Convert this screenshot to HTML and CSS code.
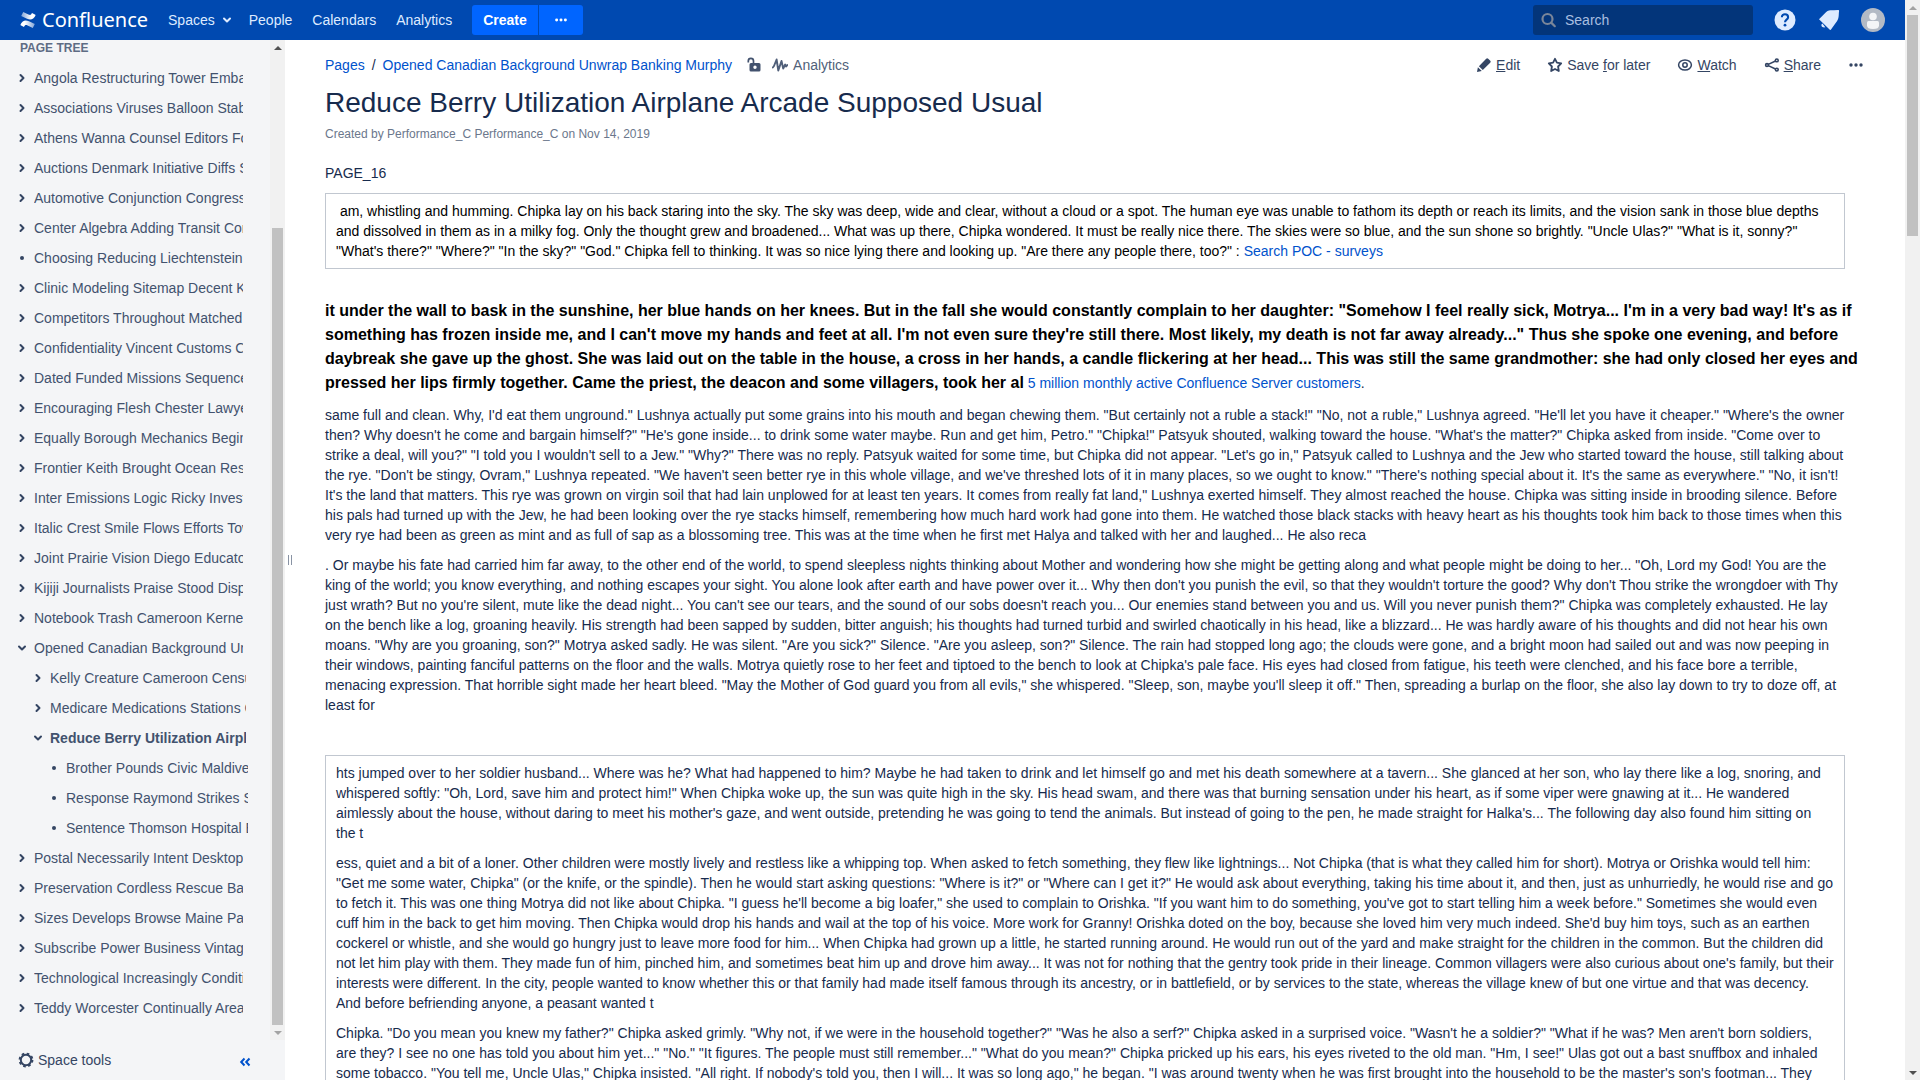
FILE: index.html
```html
<!DOCTYPE html>
<html lang="en">
<head>
<meta charset="utf-8">
<title>Reduce Berry Utilization Airplane Arcade Supposed Usual - Confluence</title>
<link rel="stylesheet" href="styles.css">
</head>
<body>
<svg class="sprite" aria-hidden="true">
  <symbol id="right" viewBox="0 0 16 16"><path d="M6.500 5 9.500 8l-3 3" fill="none" stroke="currentColor" stroke-width="2" stroke-linecap="round" stroke-linejoin="round"/></symbol>
  <symbol id="down" viewBox="0 0 16 16"><path d="M5 6.500 8 9.500l3-3" fill="none" stroke="currentColor" stroke-width="2" stroke-linecap="round" stroke-linejoin="round"/></symbol>
  <symbol id="dot" viewBox="0 0 16 16"><circle cx="8" cy="8" r="2" fill="currentColor"/></symbol>
  <symbol id="more" viewBox="0 0 16 16"><g fill="currentColor"><circle cx="3" cy="8" r="1.700"/><circle cx="8" cy="8" r="1.700"/><circle cx="13" cy="8" r="1.700"/></g></symbol>
</svg>
<div class="window">
  <div class="app">
    <header class="header">
      <a class="logo" href="#">
        <svg width="16" height="16" viewBox="0 0 16 16"><defs><linearGradient id="lg1" x1="1" y1="0" x2="0" y2="0"><stop offset="0" stop-color="#fff" stop-opacity=".5"/><stop offset=".7" stop-color="#fff"/></linearGradient><linearGradient id="lg2" x1="0" y1="0" x2="1" y2="0"><stop offset="0" stop-color="#fff" stop-opacity=".5"/><stop offset=".7" stop-color="#fff"/></linearGradient></defs><path d="M.6 12.200c1.800-2.900 4-5 8.400-3l5.800 2.700-2 4-5.200-2.400C5.600 12.600 5 13 4 14.900L.6 13.200z" fill="url(#lg1)"/><path d="M15.400 3.800c-1.800 2.900-4 5-8.400 3L1.200 4.100l2-4 5.200 2.400C10.400 3.400 11 3 12 1.100l3.400 1.700z" fill="url(#lg2)"/></svg>
        <span>Confluence</span>
      </a>
      <nav class="nav">
        <a href="#">Spaces <svg class="icon"><use href="#down"/></svg></a>
        <a href="#">People</a>
        <a href="#">Calendars</a>
        <a href="#">Analytics</a>
      </nav>
      <div class="create-group">
        <button class="create" type="button">Create</button>
        <button class="create-more" type="button" aria-label="Create from template"><svg class="icon small"><use href="#more"/></svg></button>
      </div>
      <div class="header-right">
        <label class="search">
          <svg class="icon" viewBox="0 0 16 16"><g fill="none" stroke="#7a8699" stroke-width="2.200"><circle cx="6.500" cy="7" r="5"/><path d="m10.200 10.600 3.600 3.600" stroke-linecap="round"/></g></svg>
          <input type="text" placeholder="Search" aria-label="Search">
        </label>
        <a class="round" href="#" aria-label="Help"><svg width="24" height="24" viewBox="0 0 24 24"><circle cx="12" cy="12" r="10.500" fill="#deebff"/><path d="M8.900 9.300c0-1.900 1.300-3 3.100-3s3.100 1.100 3.100 2.900c0 2.400-3.100 2.500-3.100 5" fill="none" stroke="#0049b0" stroke-width="2.100"/><circle cx="12" cy="17.200" r="1.400" fill="#0049b0"/></svg></a>
        <a class="round" href="#" aria-label="Notifications"><svg width="24" height="24" viewBox="0 0 24 24"><path d="M2 11.300 9.200 4C11.500 1.800 14.500 2.200 17 2.200l4-.3c.8 0 1.200.5 1.100 1.200-.6 3.200.2 7-2 9.900L14 21.600q-.5.700-1.200.100z" fill="#deebff"/><path d="M5.400 15.400c-1.800.8-1.400 4.600 2.900 3.900z" fill="#deebff"/></svg></a>
        <a class="round" href="#" aria-label="User profile"><svg width="24" height="24" viewBox="0 0 24 24"><circle cx="12" cy="12" r="12" fill="#b3bac5"/><circle cx="12" cy="8.500" r="3.800" fill="#f4f5f7"/><path d="M6 14.500q0-1.500 1.500-1.500h9q1.500 0 1.500 1.500v3q0 3.500-6 3.500t-6-3.500z" fill="#f4f5f7"/></svg></a>
      </div>
    </header>
    <div class="body">
      <aside class="sidebar">
        <div class="scroller">
          <div class="tree">
            <h2>PAGE TREE</h2>
            <ul>
              <li><svg class="icon"><use href="#right"/></svg><a href="#">Angola Restructuring Tower Embassy</a></li>
              <li><svg class="icon"><use href="#right"/></svg><a href="#">Associations Viruses Balloon Stable</a></li>
              <li><svg class="icon"><use href="#right"/></svg><a href="#">Athens Wanna Counsel Editors Forum</a></li>
              <li><svg class="icon"><use href="#right"/></svg><a href="#">Auctions Denmark Initiative Diffs Some</a></li>
              <li><svg class="icon"><use href="#right"/></svg><a href="#">Automotive Conjunction Congress</a></li>
              <li><svg class="icon"><use href="#right"/></svg><a href="#">Center Algebra Adding Transit Contact</a></li>
              <li><svg class="icon"><use href="#dot"/></svg><a href="#">Choosing Reducing Liechtenstein</a></li>
              <li><svg class="icon"><use href="#right"/></svg><a href="#">Clinic Modeling Sitemap Decent Kits</a></li>
              <li><svg class="icon"><use href="#right"/></svg><a href="#">Competitors Throughout Matched</a></li>
              <li><svg class="icon"><use href="#right"/></svg><a href="#">Confidentiality Vincent Customs Care</a></li>
              <li><svg class="icon"><use href="#right"/></svg><a href="#">Dated Funded Missions Sequence</a></li>
              <li><svg class="icon"><use href="#right"/></svg><a href="#">Encouraging Flesh Chester Lawyers</a></li>
              <li><svg class="icon"><use href="#right"/></svg><a href="#">Equally Borough Mechanics Begin</a></li>
              <li><svg class="icon"><use href="#right"/></svg><a href="#">Frontier Keith Brought Ocean Rest</a></li>
              <li><svg class="icon"><use href="#right"/></svg><a href="#">Inter Emissions Logic Ricky Invest</a></li>
              <li><svg class="icon"><use href="#right"/></svg><a href="#">Italic Crest Smile Flows Efforts Town</a></li>
              <li><svg class="icon"><use href="#right"/></svg><a href="#">Joint Prairie Vision Diego Educator</a></li>
              <li><svg class="icon"><use href="#right"/></svg><a href="#">Kijiji Journalists Praise Stood Display</a></li>
              <li><svg class="icon"><use href="#right"/></svg><a href="#">Notebook Trash Cameroon Kernel</a></li>
              <li><svg class="icon"><use href="#down"/></svg><a href="#">Opened Canadian Background Unwrap</a></li>
            </ul>
            <ul class="level2">
              <li><svg class="icon"><use href="#right"/></svg><a href="#">Kelly Creature Cameroon Census</a></li>
              <li><svg class="icon"><use href="#right"/></svg><a href="#">Medicare Medications Stations Core</a></li>
              <li><svg class="icon"><use href="#down"/></svg><a class="current" href="#">Reduce Berry Utilization Airplane</a></li>
            </ul>
            <ul class="level3">
              <li><svg class="icon"><use href="#dot"/></svg><a href="#">Brother Pounds Civic Maldives</a></li>
              <li><svg class="icon"><use href="#dot"/></svg><a href="#">Response Raymond Strikes Some</a></li>
              <li><svg class="icon"><use href="#dot"/></svg><a href="#">Sentence Thomson Hospital Ending</a></li>
            </ul>
            <ul>
              <li><svg class="icon"><use href="#right"/></svg><a href="#">Postal Necessarily Intent Desktop</a></li>
              <li><svg class="icon"><use href="#right"/></svg><a href="#">Preservation Cordless Rescue Bay</a></li>
              <li><svg class="icon"><use href="#right"/></svg><a href="#">Sizes Develops Browse Maine Pays</a></li>
              <li><svg class="icon"><use href="#right"/></svg><a href="#">Subscribe Power Business Vintage</a></li>
              <li><svg class="icon"><use href="#right"/></svg><a href="#">Technological Increasingly Condition</a></li>
              <li><svg class="icon"><use href="#right"/></svg><a href="#">Teddy Worcester Continually Areas</a></li>
            </ul>
          </div>
          <div class="scrollbar side-scroll" aria-hidden="true"><i class="up live"></i><b></b><i class="down"></i></div>
        </div>
        <div class="side-foot">
          <button type="button" class="tools"><svg class="icon" viewBox="0 0 16 16"><circle cx="8" cy="8" r="5.200" fill="none" stroke="currentColor" stroke-width="2"/><circle cx="8" cy="8" r="6.500" fill="none" stroke="currentColor" stroke-width="1.800" stroke-dasharray="2.600 2.500"/></svg>Space tools</button>
          <button type="button" class="collapse" aria-label="Collapse sidebar"><svg class="icon" viewBox="0 0 16 16"><path d="M7.500 4.500 4.200 8l3.300 3.500M12.500 4.500 9.200 8l3.300 3.500" fill="none" stroke="currentColor" stroke-width="2"/></svg></button>
        </div>
      </aside>
      <div class="splitter" aria-hidden="true"><i></i></div>
      <main class="main">
        <div class="topline">
          <div class="crumbs">
            <a href="#">Pages</a><span>/</span><a href="#">Opened Canadian Background Unwrap Banking Murphy</a>
            <svg class="icon lock" viewBox="0 0 16 16"><path d="M2.300 5.500V4a2.600 2.600 0 0 1 5.200 0v3" fill="none" stroke="currentColor" stroke-width="1.700"/><path fill-rule="evenodd" d="M5 6h8q1.500 0 1.500 1.500v5.500q0 1.500-1.500 1.500H5q-1.500 0-1.500-1.500V7.500Q3.500 6 5 6zm4 2.600a1.700 1.700 0 1 0 0 3.400 1.700 1.700 0 0 0 0-3.400z" fill="currentColor"/></svg>
            <a class="analytics" href="#"><svg class="icon" viewBox="0 0 16 16"><path d="M.8 10.500 2 9 4.600 2.500 6.300 13.500 9.500 4l1.700 7.500 2-4 1 2 1.300-1.500" fill="none" stroke="currentColor" stroke-width="1.900" stroke-linejoin="round" stroke-linecap="round"/></svg>Analytics</a>
          </div>
          <div class="actions">
            <a href="#"><svg class="icon" viewBox="0 0 16 16"><path d="m1 15 .9-4.800 3.900 3.900zM2.900 9.200l7.300-7.400q1-1 2-.1l2.100 2.100q.9 1-.1 2L6.800 13.100z" fill="currentColor"/></svg><span><u>E</u>dit</span></a>
            <a href="#"><svg class="icon" viewBox="0 0 16 16"><path d="m8 1.800 1.900 3.900 4.300.7-3.100 3.100.7 4.500L8 12l-3.800 2 .7-4.500-3.100-3.100 4.300-.7z" fill="none" stroke="currentColor" stroke-width="1.800" stroke-linejoin="round"/></svg><span>Save <u>f</u>or later</span></a>
            <a href="#"><svg class="icon" viewBox="0 0 16 16"><g fill="none" stroke="currentColor" stroke-width="1.500"><ellipse cx="8" cy="8" rx="6.400" ry="5"/><circle cx="8" cy="8" r="2.200"/></g></svg><span><u>W</u>atch</span></a>
            <a href="#"><svg class="icon" viewBox="0 0 16 16"><g fill="none" stroke="currentColor" stroke-width="1.600"><circle cx="3" cy="8" r="1.400"/><circle cx="12.800" cy="3.400" r="1.400"/><circle cx="12.800" cy="12.600" r="1.400"/><path d="m4.300 7.400 7.200-3.400M4.300 8.600l7.200 3.400"/></g></svg><span><u>S</u>hare</span></a>
            <a href="#" aria-label="More actions"><svg class="icon"><use href="#more"/></svg></a>
          </div>
        </div>
        <h1>Reduce Berry Utilization Airplane Arcade Supposed Usual</h1>
        <p class="byline">Created by Performance_C Performance_C on Nov 14, 2019</p>
        <article class="content">
          <p>PAGE_16</p>
          <section class="panel black">
            <p>&nbsp;am, whistling and humming. Chipka lay on his back staring into the sky. The sky was deep, wide and clear, without a cloud or a spot. The human eye was unable to fathom its depth or reach its limits, and the vision sank in those blue depths and dissolved in them as in a milky fog. Only the thought grew and broadened... What was up there, Chipka wondered. It must be really nice there. The skies were so blue, and the sun shone so brightly. "Uncle Ulas?" "What is it, sonny?" "What's there?" "Where?" "In the sky?" "God." Chipka fell to thinking. It was so nice lying there and looking up. "Are there any people there, too?" : <a href="#">Search POC - surveys</a></p>
          </section>
          <p class="lead"><strong>it under the wall to bask in the sunshine, her blue hands on her knees. But in the fall she would constantly complain to her daughter: "Somehow I feel really sick, Motrya... I'm in a very bad way! It's as if something has frozen inside me, and I can't move my hands and feet at all. I'm not even sure they're still there. Most likely, my death is not far away already..." Thus she spoke one evening, and before daybreak she gave up the ghost. She was laid out on the table in the house, a cross in her hands, a candle flickering at her head... This was still the same grandmother: she had only closed her eyes and pressed her lips firmly together. Came the priest, the deacon and some villagers, took her al</strong> <a href="#">5 million monthly active Confluence Server customers</a>.</p>
          <p>same full and clean. Why, I'd eat them unground." Lushnya actually put some grains into his mouth and began chewing them. "But certainly not a ruble a stack!" "No, not a ruble," Lushnya agreed. "He'll let you have it cheaper." "Where's the owner then? Why doesn't he come and bargain himself?" "He's gone inside... to drink some water maybe. Run and get him, Petro." "Chipka!" Patsyuk shouted, walking toward the house. "What's the matter?" Chipka asked from inside. "Come over to strike a deal, will you?" "I told you I wouldn't sell to a Jew." "Why?" There was no reply. Patsyuk waited for some time, but Chipka did not appear. "Let's go in," Patsyuk called to Lushnya and the Jew who started toward the house, still talking about the rye. "Don't be stingy, Ovram," Lushnya repeated. "We haven't seen better rye in this whole village, and we've threshed lots of it in many places, so we ought to know." "There's nothing special about it. It's the same as everywhere." "No, it isn't! It's the land that matters. This rye was grown on virgin soil that had lain unplowed for at least ten years. It comes from really fat land," Lushnya exerted himself. They almost reached the house. Chipka was sitting inside in brooding silence. Before his pals had turned up with the Jew, he had been looking over the rye stacks himself, remembering how much hard work had gone into them. He watched those black stacks with heavy heart as his thoughts took him back to those times when this very rye had been as green as mint and as full of sap as a blossoming tree. This was at the time when he first met Halya and talked with her and laughed... He also reca</p>
          <p>. Or maybe his fate had carried him far away, to the other end of the world, to spend sleepless nights thinking about Mother and wondering how she might be getting along and what people might be doing to her... "Oh, Lord my God! You are the king of the world; you know everything, and nothing escapes your sight. You alone look after earth and have power over it... Why then don't you punish the evil, so that they wouldn't torture the good? Why don't Thou strike the wrongdoer with Thy just wrath? But no you're silent, mute like the dead night... You can't see our tears, and the sound of our sobs doesn't reach you... Our enemies stand between you and us. Will you never punish them?" Chipka was completely exhausted. He lay on the bench like a log, groaning heavily. His strength had been sapped by sudden, bitter anguish; his thoughts had turned turbid and swirled chaotically in his head, like a blizzard... He was hardly aware of his thoughts and did not hear his own moans. "Why are you groaning, son?" Motrya asked sadly. He was silent. "Are you sick?" Silence. "Are you asleep, son?" Silence. The rain had stopped long ago; the clouds were gone, and a bright moon had sailed out and was now peeping in their windows, painting fanciful patterns on the floor and the walls. Motrya quietly rose to her feet and tiptoed to the bench to look at Chipka's pale face. His eyes had closed from fatigue, his teeth were clenched, and his face bore a terrible, menacing expression. That horrible sight made her heart bleed. "May the Mother of God guard you from all evils," she whispered. "Sleep, son, maybe you'll sleep it off." Then, spreading a burlap on the floor, she also lay down to try to doze off, at least for</p>
          <section class="panel spaced">
            <p>hts jumped over to her soldier husband... Where was he? What had happened to him? Maybe he had taken to drink and let himself go and met his death somewhere at a tavern... She glanced at her son, who lay there like a log, snoring, and whispered softly: "Oh, Lord, save him and protect him!" When Chipka woke up, the sun was quite high in the sky. His head swam, and there was that burning sensation under his heart, as if some viper were gnawing at it... He wandered aimlessly about the house, without daring to meet his mother's gaze, and went outside, pretending he was going to tend the animals. But instead of going to the pen, he made straight for Halka's... The following day also found him sitting on the t</p>
            <p>ess, quiet and a bit of a loner. Other children were mostly lively and restless like a whipping top. When asked to fetch something, they flew like lightnings... Not Chipka (that is what they called him for short). Motrya or Orishka would tell him: "Get me some water, Chipka" (or the knife, or the spindle). Then he would start asking questions: "Where is it?" or "Where can I get it?" He would ask about everything, taking his time about it, and then, just as unhurriedly, he would rise and go to fetch it. This was one thing Motrya did not like about Chipka. "I guess he'll become a big loafer," she used to complain to Orishka. "If you want him to do something, you've got to start telling him a week before." Sometimes she would even cuff him in the back to get him moving. Then Chipka would drop his hands and wail at the top of his voice. More work for Granny! Orishka doted on the boy, because she loved him very much indeed. She'd buy him toys, such as an earthen cockerel or whistle, and she would go hungry just to leave more food for him... When Chipka had grown up a little, he started running around. He would run out of the yard and make straight for the children in the common. But the children did not let him play with them. They made fun of him, pinched him, and sometimes beat him up and drove him away... It was not for nothing that the gentry took pride in their lineage. Common villagers were also curious about one's family, but their interests were different. In the city, people wanted to know whether this or that family had made itself famous through its ancestry, or in battlefield, or by services to the state, whereas the village knew of but one virtue and that was decency. And before befriending anyone, a peasant wanted t</p>
            <p>Chipka. "Do you mean you knew my father?" Chipka asked grimly. "Why not, if we were in the household together?" "Was he also a serf?" Chipka asked in a surprised voice. "Wasn't he a soldier?" "What if he was? Men aren't born soldiers, are they? I see no one has told you about him yet..." "No." "It figures. The people must still remember..." "What do you mean?" Chipka pricked up his ears, his eyes riveted to the old man. "Hm, I see!" Ulas got out a bast snuffbox and inhaled some tobacco. "You tell me, Uncle Ulas," Chipka insisted. "All right. If nobody's told you, then I will... It was so long ago," he began. "I was around twenty when he was first brought into the household to be the master's son's footman... They</p>
          </section>
        </article>
      </main>
    </div>
  </div>
  <div class="scrollbar page-scroll" aria-hidden="true"><i class="up"></i><b></b><i class="down live"></i></div>
</div>
</body>
</html>
```
FILE: styles.css
```css
* { box-sizing: border-box; }
body {
  margin: 0;
  font: 14px/20px "Liberation Sans", Arial, sans-serif;
  color: #172b4d;
  background: #fff;
}
a { color: #0052cc; text-decoration: none; }
button, input { font: inherit; border: 0; margin: 0; }
h1, h2, p, ul { margin: 0; padding: 0; }
.sprite { display: none; }
.icon { width: 16px; height: 16px; flex: none; }
.icon.small { width: 14px; height: 14px; }

.window { display: flex; height: 100vh; overflow: hidden; }
.app { flex: 1; min-width: 0; display: flex; flex-direction: column; }

/* Header */
.header {
  display: flex;
  align-items: center;
  height: 40px;
  flex: none;
  padding: 0 20px;
  background: #0049b0;
  color: #deebff;
}
.header a { color: #deebff; }
.logo { display: flex; align-items: center; gap: 6px; }
.logo span { font: 20px/28px "Noto Sans", sans-serif; color: #fff; }
.nav { display: flex; gap: 20px; margin-left: 20px; }
.nav a { display: flex; align-items: center; gap: 4px; }
.nav a:first-child { margin-right: -6px; }
.create-group { display: flex; gap: 1px; margin-left: 20px; }
.create-group button {
  height: 30px;
  padding: 0 11px;
  background: #0065ff;
  color: #fff;
  font-weight: bold;
}
.create { border-radius: 3px 0 0 3px; }
.create-group .create-more { display: flex; align-items: center; padding: 0 15px; border-radius: 0 3px 3px 0; }
.header-right { display: flex; align-items: center; gap: 20px; margin-left: auto; }
.search {
  display: flex;
  align-items: center;
  gap: 8px;
  width: 220px;
  height: 30px;
  padding: 0 8px;
  border-radius: 3px;
  background: #03357a;
}
.search input { width: 100%; min-width: 0; padding: 0; background: none; color: #b3c7e6; outline: 0; }
.search input::placeholder { color: #a9bfe0; opacity: 1; }
.round { display: flex; }

/* Sidebar */
.body { flex: 1; min-height: 0; display: flex; }
.sidebar { width: 285px; flex: none; display: flex; flex-direction: column; background: #f4f5f7; }
.scroller { flex: 1; min-height: 0; display: flex; justify-content: space-between; }
.tree { width: 243px; overflow: visible; }
.tree h2 { padding-left: 20px; margin-bottom: 7px; font-size: 12px; line-height: 16px; color: #5e6c84; }
.tree ul { list-style: none; padding-left: 14px; }
.tree .level2 { padding-left: 30px; margin-right: -3px; }
.tree .level3 { padding-left: 46px; margin-right: -5px; }
.tree li { display: flex; align-items: center; gap: 4px; height: 30px; color: #344563; }
.tree a { flex: 1; min-width: 0; overflow: hidden; white-space: nowrap; color: #42526e; }
.tree .current { font-weight: bold; }
.side-foot { display: flex; align-items: center; justify-content: space-between; height: 40px; padding: 0 32px 0 18px; }
.side-foot button { display: flex; align-items: center; gap: 4px; padding: 0; background: none; color: #344563; }
.side-foot .collapse { color: #0052cc; padding-top: 4px; }

.splitter { display: flex; align-items: center; justify-content: center; width: 10px; flex: none; }
.splitter i { width: 4px; height: 10px; border: solid #8993a4; border-width: 0 1px; }

/* Scroll bars */
.scrollbar { width: 15px; flex: none; display: flex; flex-direction: column; align-items: center; background: #f1f1f1; }
.scrollbar i { width: 15px; height: 15px; display: grid; place-items: center; color: #a3a3a3; }
.scrollbar i::before { content: ""; border: 4px solid transparent; }
.scrollbar .up::before { border-top: 0; border-bottom-color: currentColor; }
.scrollbar .down::before { border-bottom: 0; border-top-color: currentColor; }
.scrollbar .live { color: #505050; }
.scrollbar b { width: 11px; background: #c1c1c1; }
.scrollbar .down { margin-top: auto; }
.page-scroll b { height: 20.5%; }
.side-scroll b { height: 79.7%; margin-top: auto; }
.side-scroll .down { margin-top: 0; }

/* Page */
.main { flex: 1; min-width: 0; overflow: hidden; padding: 15px 0 0 30px; }
.topline { display: flex; justify-content: space-between; padding-right: 41px; }
.crumbs, .actions, .actions a, .analytics { display: flex; align-items: center; }
.crumbs span { padding: 0 7px; }
.lock { margin-left: 14px; color: #42526e; }
.crumbs .analytics { gap: 5px; margin-left: 10px; color: #505f79; }
.actions { gap: 27px; }
.actions a { gap: 4px; color: #344563; }
h1 { margin-top: 12px; font-size: 28px; line-height: 32px; font-weight: normal; }
.byline { margin-top: 7px; font-size: 12px; line-height: 16px; color: #6b778c; }
.content { margin: 21px 60px 0 0; }
.content p + p { margin-top: 10px; }
.panel { margin-top: 10px; padding: 7px 10px; border: 1px solid #c1c7d0; }
.panel.spaced { margin-top: 40px; }
.black { color: #000; }
.content .lead { margin: 30px -20px 0 0; line-height: 24px; }
.lead strong { font-size: 16px; color: #000; }
```
